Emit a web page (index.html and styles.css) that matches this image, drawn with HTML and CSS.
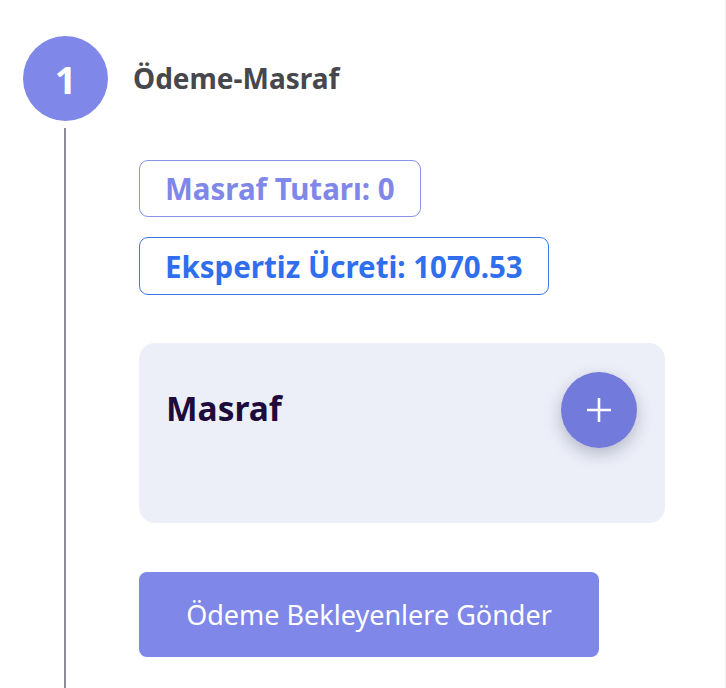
FILE: index.html
```html
<!DOCTYPE html>
<html lang="tr">
<head>
<meta charset="utf-8">
<link rel="stylesheet" href="styles.css">
</head>
<body>
<div class="page">
  <div class="stepper">
    <div class="step-head">
      <div class="step-num">1</div>
      <div class="step-title">Ödeme-Masraf</div>
    </div>
    <div class="step-body">
      <div class="rail"><div class="rail-line"></div></div>
      <div class="content">
        <div class="chip chip-purple">Masraf Tutarı: 0</div>
        <div class="chip chip-blue">Ekspertiz Ücreti: 1070.53</div>
        <div class="card">
          <div class="card-title">Masraf</div>
          <button class="fab" aria-label="Ekle">
            <svg width="28" height="28" viewBox="0 0 28 28"><path d="M14 2v24M2 14h24" stroke="#fff" stroke-width="2.6" fill="none"/></svg>
          </button>
        </div>
        <button class="submit">Ödeme Bekleyenlere Gönder</button>
      </div>
    </div>
  </div>
  <div class="edge"></div>
</div>
</body>
</html>
```
FILE: styles.css
```css
* { box-sizing: border-box; }
html, body { margin: 0; padding: 0; height: 100%; overflow: hidden; }
body {
  font-family: "Noto Sans", "Open Sans", sans-serif;
  background: #fff;
}
.page {
  display: flex;
  height: 688px;
}
.stepper {
  flex: 1;
  display: flex;
  flex-direction: column;
  padding-top: 36px;
}
.edge {
  width: 1px;
  background: #eeeeee;
}
.step-head {
  display: flex;
  align-items: center;
  padding-left: 23px;
}
.step-num {
  width: 85px;
  height: 85px;
  border-radius: 50%;
  background: #7f88e8;
  color: #fff;
  font-weight: 700;
  font-size: 38px;
  display: flex;
  align-items: center;
  justify-content: center;
  line-height: 1;
}
.step-title {
  margin-left: 25px;
  font-size: 28px;
  font-weight: 700;
  color: #47474d;
  margin-top: -2px;
}
.step-body {
  flex: 1;
  display: flex;
}
.rail {
  width: 139px;
  padding-left: 64px;
  padding-top: 7px;
  display: flex;
}
.rail-line {
  width: 2px;
  background: #8c8c92;
}
.content {
  display: flex;
  flex-direction: column;
  align-items: flex-start;
  padding-top: 39px;
}
.chip {
  height: 57px;
  padding: 0 25px;
  border-radius: 9px;
  font-size: 29.5px;
  font-weight: 700;
  display: flex;
  align-items: center;
  border: 1.5px solid;
}
.chip-purple {
  color: #7f88e8;
  border-color: #8a92ea;
}
.chip-blue {
  margin-top: 20px;
  height: 58px;
  color: #2f6eec;
  border-color: #3a76ee;
}
.card {
  margin-top: 48px;
  width: 526px;
  height: 180px;
  background: #eceff8;
  border-radius: 16px;
  display: flex;
  justify-content: space-between;
  align-items: flex-start;
  padding: 29px 28px 0 27px;
}
.card-title {
  font-size: 33.5px;
  line-height: 1;
  font-weight: 700;
  color: #1f0b3b;
  margin-top: 20px;
}
.fab {
  width: 76px;
  height: 76px;
  border-radius: 50%;
  border: none;
  background: #727adb;
  box-shadow: 0 6px 16px rgba(40, 40, 80, 0.28);
  display: flex;
  align-items: center;
  justify-content: center;
  padding: 0;
}
.submit {
  margin-top: 49px;
  width: 460px;
  height: 85px;
  border: none;
  border-radius: 8px;
  background: #7f88e8;
  color: #fff;
  font-family: inherit;
  font-size: 27px;
  font-weight: 400;
  padding: 0;
}
```
